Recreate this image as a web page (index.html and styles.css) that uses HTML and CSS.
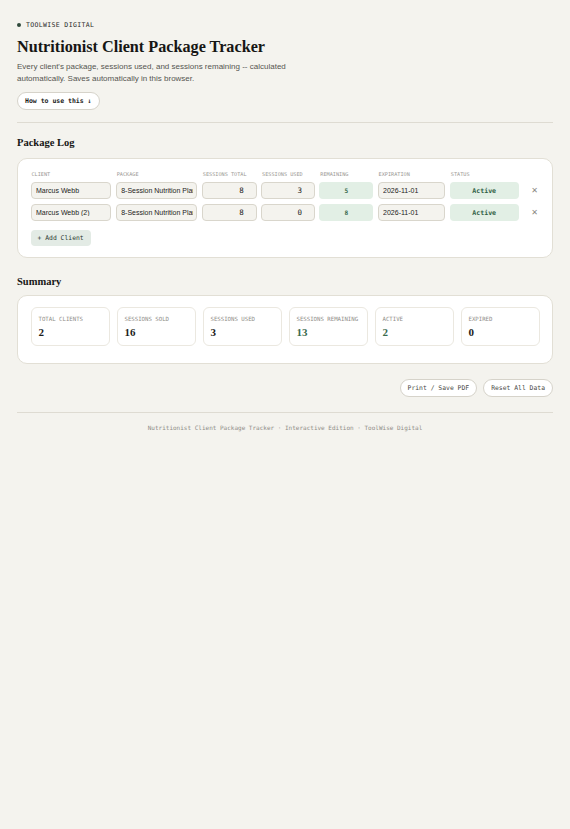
FILE: index.html
```html
<!DOCTYPE html>
<html lang="en">
<head>
<meta charset="utf-8">
<title>Nutritionist Client Package Tracker</title>
<link rel="stylesheet" href="styles.css">
</head>
<body>
<div class="wrap">
  <div class="brand"><span class="dot"></span>TOOLWISE DIGITAL</div>
  <h1 class="title">Nutritionist Client Package Tracker</h1>
  <p class="sub">Every client's package, sessions used, and sessions remaining -- calculated<br>automatically. Saves automatically in this browser.</p>
  <button class="howto">How to use this ↓</button>
  <hr class="rule">

  <h2 class="section">Package Log</h2>
  <div class="card log">
    <div class="grid head">
      <span>CLIENT</span><span>PACKAGE</span><span>SESSIONS TOTAL</span><span>SESSIONS USED</span><span>REMAINING</span><span>EXPIRATION</span><span>STATUS</span><span></span>
    </div>
    <div class="grid row">
      <input class="in" value="Marcus Webb">
      <input class="in" value="8-Session Nutrition Plan">
      <input class="in num" value="8">
      <input class="in num" value="3">
      <span class="rem">5</span>
      <input class="in" value="2026-11-01">
      <span class="status">Active</span>
      <span class="del">✕</span>
    </div>
    <div class="grid row">
      <input class="in" value="Marcus Webb (2)">
      <input class="in" value="8-Session Nutrition Plan">
      <input class="in num" value="8">
      <input class="in num" value="0">
      <span class="rem">8</span>
      <input class="in" value="2026-11-01">
      <span class="status">Active</span>
      <span class="del">✕</span>
    </div>
    <button class="add">+ Add Client</button>
  </div>

  <h2 class="section second">Summary</h2>
  <div class="card sum">
    <div class="stat"><div class="lbl">TOTAL CLIENTS</div><div class="val">2</div></div>
    <div class="stat"><div class="lbl">SESSIONS SOLD</div><div class="val">16</div></div>
    <div class="stat"><div class="lbl">SESSIONS USED</div><div class="val">3</div></div>
    <div class="stat"><div class="lbl">SESSIONS REMAINING</div><div class="val green">13</div></div>
    <div class="stat"><div class="lbl">ACTIVE</div><div class="val green">2</div></div>
    <div class="stat"><div class="lbl">EXPIRED</div><div class="val">0</div></div>
  </div>

  <div class="actions">
    <button class="pill">Print / Save PDF</button>
    <button class="pill">Reset All Data</button>
  </div>
  <hr class="rule foot-rule">
  <p class="footer">Nutritionist Client Package Tracker · Interactive Edition · ToolWise Digital</p>
</div>
</body>
</html>
```

FILE: styles.css
```css
* { box-sizing: border-box; }
html, body { margin: 0; background: #f4f3ee; }
body { color: #1c1c1a; font-family: "Liberation Sans", Arial, sans-serif; }
.wrap { padding: 21px 17px 30px; }

.brand {
  display: flex; align-items: center; gap: 5px;
  font: 6.5px/8px "DejaVu Sans Mono", monospace;
  letter-spacing: 0.35px; color: #2a2a28;
}
.dot { width: 4px; height: 4px; border-radius: 50%; background: #2f4a3b; }

.title {
  font: bold 16.2px/20px "Liberation Serif", "Times New Roman", serif;
  margin: 8px 0 4px; color: #161614;
}
.sub {
  font-size: 8px; line-height: 12px; color: #555550; margin: 0 0 4px;
}
.howto {
  font: bold 6.5px/1 "DejaVu Sans Mono", monospace;
  background: #fff; color: #1c1c1a;
  border: 1px solid #d6d3ca; border-radius: 9px;
  height: 18px; padding: 0 7px;
}
.rule { border: 0; border-top: 1px solid #dedbd2; margin: 12px 0 0; }

.section {
  font: bold 10.5px/14px "Liberation Serif", "Times New Roman", serif;
  margin: 13px 0 8px; color: #161614;
}
.section.second { margin-top: 17px; margin-bottom: 6px; }
.card {
  background: #fff; border: 1.5px solid #e2dfd5; border-radius: 10px;
}
.log { padding: 11px 12px 11px 12.5px; }

.grid {
  display: grid;
  grid-template-columns: 81fr 82fr 55fr 54fr 54fr 68fr 69fr 17px;
  column-gap: 4.4px;
}
.head span {
  font: 5.2px/8px "DejaVu Sans Mono", monospace; color: #9a9893;
  padding-left: 1px; margin-bottom: 4px;
}
.row { height: 17px; margin-bottom: 5px; }
.in {
  width: 100%; min-width: 0; height: 17px;
  background: #f4f3ee; border: 1px solid #d9d6cc; border-radius: 4px;
  font: 7px "Liberation Sans", Arial, sans-serif; color: #1c1c1a;
  padding: 0 3px 0 4.5px; outline: none;
}
.in.num { text-align: right; font: 7.5px "DejaVu Sans Mono", monospace; padding-right: 12px; color: #1c1c1a; }
.rem {
  background: #e2efe5; border-radius: 4px; color: #3a6b4e;
  display: flex; align-items: center; justify-content: center;
  font: bold 6.2px "DejaVu Sans Mono", monospace;
}
.status {
  background: #e2efe5; border-radius: 4px; color: #2f6044;
  display: flex; align-items: center; justify-content: center;
  font: bold 6.6px "DejaVu Sans Mono", monospace;
}
.del {
  display: flex; align-items: center; justify-content: center;
  color: #8a8882; font: 8px "DejaVu Sans", sans-serif; padding-left: 6px;
}
.add {
  margin-top: 3px;
  font: 6.4px/1 "DejaVu Sans Mono", monospace; color: #2c3a31;
  background: #e3ebe5; border: 0; border-radius: 4px;
  height: 16px; padding: 0 7px;
}

.sum {
  display: grid; grid-template-columns: repeat(6, 1fr); gap: 7px;
  padding: 11px 12.5px 17px 12.5px;
}
.stat {
  border: 1px solid #ebe8e0; border-radius: 6px; height: 39px;
  padding: 8px 7px 0;
}
.lbl { font: 5.7px/7px "DejaVu Sans Mono", monospace; color: #8f8d88; }
.val { font: bold 11px/13px "Liberation Serif", serif; margin-top: 3px; color: #1c1c1a; }
.val.green { color: #3a6b4e; }

.actions { display: flex; justify-content: flex-end; gap: 6px; margin-top: 15px; }
.pill {
  font: 6.4px/1 "DejaVu Sans Mono", monospace; color: #4a4a46;
  background: #fff; border: 1px solid #d6d3ca; border-radius: 9px;
  height: 18px; padding: 0 7px;
}
.foot-rule { margin-top: 15px; }
.footer {
  text-align: center; margin: 11px 0 0;
  font: 6px/8px "DejaVu Sans Mono", monospace; color: #8f8d88;
}
```
